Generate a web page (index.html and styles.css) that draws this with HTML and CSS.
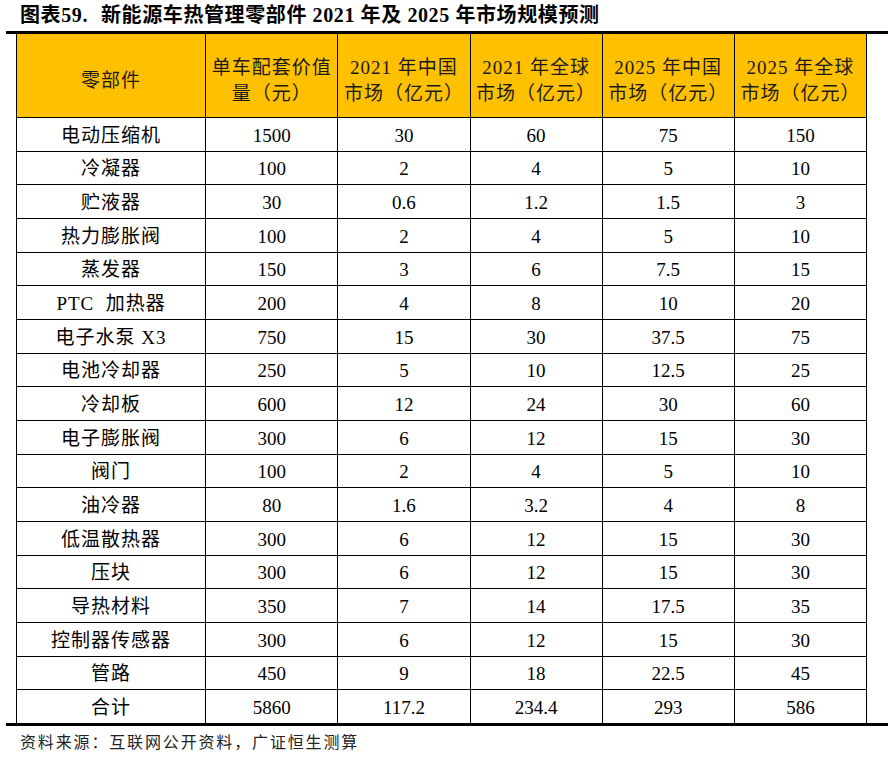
FILE: index.html
```html
<!DOCTYPE html>
<html lang="zh-CN">
<head>
<meta charset="utf-8">
<title>新能源车热管理零部件市场规模预测</title>
<link rel="stylesheet" href="styles.css">
</head>
<body>
<div class="page">
  <div class="title">图表59.<span class="gap"></span>新能源车热管理零部件 2021 年及 2025 年市场规模预测</div>
  <div class="rule"></div>
  <table class="data">
    <colgroup>
      <col class="c1"><col class="c2"><col class="c3"><col class="c4"><col class="c5"><col class="c6">
    </colgroup>
    <thead>
      <tr>
        <th>零部件</th>
        <th>单车配套价值<br>量（元）</th>
        <th>2021 年中国<br>市场（亿元）</th>
        <th>2021 年全球<br>市场（亿元）</th>
        <th>2025 年中国<br>市场（亿元）</th>
        <th>2025 年全球<br>市场（亿元）</th>
      </tr>
    </thead>
    <tbody>
      <tr><td class="name">电动压缩机</td><td>1500</td><td>30</td><td>60</td><td>75</td><td>150</td></tr>
      <tr><td class="name">冷凝器</td><td>100</td><td>2</td><td>4</td><td>5</td><td>10</td></tr>
      <tr><td class="name">贮液器</td><td>30</td><td>0.6</td><td>1.2</td><td>1.5</td><td>3</td></tr>
      <tr><td class="name">热力膨胀阀</td><td>100</td><td>2</td><td>4</td><td>5</td><td>10</td></tr>
      <tr><td class="name">蒸发器</td><td>150</td><td>3</td><td>6</td><td>7.5</td><td>15</td></tr>
      <tr><td class="name">PTC&nbsp; 加热器</td><td>200</td><td>4</td><td>8</td><td>10</td><td>20</td></tr>
      <tr><td class="name">电子水泵 X3</td><td>750</td><td>15</td><td>30</td><td>37.5</td><td>75</td></tr>
      <tr><td class="name">电池冷却器</td><td>250</td><td>5</td><td>10</td><td>12.5</td><td>25</td></tr>
      <tr><td class="name">冷却板</td><td>600</td><td>12</td><td>24</td><td>30</td><td>60</td></tr>
      <tr><td class="name">电子膨胀阀</td><td>300</td><td>6</td><td>12</td><td>15</td><td>30</td></tr>
      <tr><td class="name">阀门</td><td>100</td><td>2</td><td>4</td><td>5</td><td>10</td></tr>
      <tr><td class="name">油冷器</td><td>80</td><td>1.6</td><td>3.2</td><td>4</td><td>8</td></tr>
      <tr><td class="name">低温散热器</td><td>300</td><td>6</td><td>12</td><td>15</td><td>30</td></tr>
      <tr><td class="name">压块</td><td>300</td><td>6</td><td>12</td><td>15</td><td>30</td></tr>
      <tr><td class="name">导热材料</td><td>350</td><td>7</td><td>14</td><td>17.5</td><td>35</td></tr>
      <tr><td class="name">控制器传感器</td><td>300</td><td>6</td><td>12</td><td>15</td><td>30</td></tr>
      <tr><td class="name">管路</td><td>450</td><td>9</td><td>18</td><td>22.5</td><td>45</td></tr>
      <tr><td class="name">合计</td><td>5860</td><td>117.2</td><td>234.4</td><td>293</td><td>586</td></tr>
    </tbody>
  </table>
  <div class="rule"></div>
  <div class="source">资料来源：互联网公开资料，广证恒生测算</div>
</div>
</body>
</html>
```

FILE: styles.css
```css
html, body {
  margin: 0;
  padding: 0;
  background: #ffffff;
}

body {
  font-family: "Liberation Serif", "Noto Sans CJK SC", serif;
  color: #000000;
}

.page {
  width: 882px;
  padding-left: 6px;
}

.title {
  height: 31px;
  line-height: 30px;
  padding-left: 14px;
  font-size: 20px;
  font-weight: bold;
  letter-spacing: 0.6px;
  white-space: nowrap;
}

.gap {
  display: inline-block;
  width: 13px;
}

.rule {
  height: 3px;
  background: #000000;
}

.data {
  margin-left: 10px;
  width: 851px;
  table-layout: fixed;
  border-collapse: separate;
  border-spacing: 0;
  border-right: 1px solid #000000;
}

.c1 { width: 189px; }
.c2 { width: 132px; }
.c3 { width: 132px; }
.c4 { width: 132px; }
.c5 { width: 132px; }
.c6 { width: 132px; }

.data th,
.data td {
  box-sizing: border-box;
  padding: 0;
  border-left: 1px solid #000000;
  text-align: center;
  vertical-align: middle;
  font-weight: normal;
}

.data thead tr {
  height: 83px;
}

.data th {
  background: #ffc000;
  color: #1a1a1a;
  font-size: 19px;
  line-height: 26px;
  letter-spacing: 1px;
  padding-top: 10px;
}

.data tbody tr {
  height: 33.67px;
}

.data td {
  border-top: 1px solid #000000;
  font-size: 19px;
  line-height: 22px;
  padding-top: 3px;
}

.data td.name {
  letter-spacing: 1px;
}

.source {
  padding-top: 6px;
  padding-left: 14px;
  line-height: 22px;
  font-size: 16px;
  letter-spacing: 1.85px;
  color: #222222;
}
```
